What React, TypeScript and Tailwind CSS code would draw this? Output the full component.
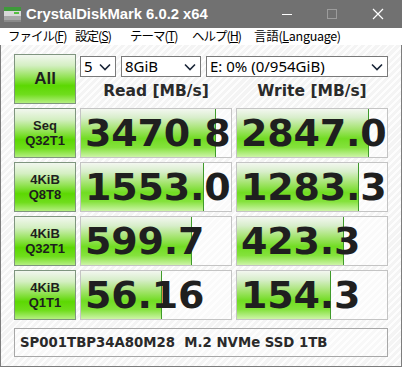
import React from 'react';

const hatch =
  'bg-[repeating-linear-gradient(135deg,#f4f4f4_0px,#f4f4f4_3px,#fdfdfd_3px,#fdfdfd_5px)]';

const rows = [
  { top: 'Seq', bottom: 'Q32T1', read: '3470.8', readW: 90, write: '2847.0', writeW: 88 },
  { top: '4KiB', bottom: 'Q8T8', read: '1553.0', readW: 82, write: '1283.3', writeW: 81 },
  { top: '4KiB', bottom: 'Q32T1', read: '599.7', readW: 74, write: '423.3', writeW: 71 },
  { top: '4KiB', bottom: 'Q1T1', read: '56.16', readW: 54, write: '154.3', writeW: 62.5 },
];

const btnClass =
  'border border-[#7f957f] bg-[linear-gradient(to_bottom,#f2f7ef_0%,#d4efc2_22%,#96e35a_45%,#5cd802_64%,#6fdd1c_82%,#b4ef80_100%)] flex flex-col items-center justify-center text-[#1e1e1e] font-["Liberation_Sans",sans-serif] font-bold';

function Chevron() {
  return (
    <svg width="12" height="8" viewBox="0 0 12 8" className="shrink-0">
      <polyline points="1,1.5 6,6.5 11,1.5" fill="none" stroke="#1a2638" strokeWidth="1.6" />
    </svg>
  );
}

function Select({ label, w }: { label: string; w: string }) {
  return (
    <div className={`${w} h-full bg-white border border-[#7a7a7a] flex items-center justify-between pl-[3px] pr-[4px] text-[15px] text-black font-["Noto_Sans",sans-serif] leading-none`}>
      <span>{label}</span>
      <Chevron />
    </div>
  );
}

function Cell({ value, pct }: { value: string; pct: number }) {
  return (
    <div className="relative h-[50px] border border-[#c4c4c4] bg-white/50 flex items-center pl-[4px] overflow-hidden">
      <div
        className="absolute left-0 top-0 bottom-0 border-r border-[#3f9a2a] bg-[linear-gradient(to_bottom,#f3f7f0_0%,#d8eecb_18%,#a3e46d_42%,#71dc22_62%,#84e23c_80%,#cdf4a8_100%)]"
        style={{ width: `${pct}%` }}
      />
      <span className='relative text-[38px] font-bold leading-none text-[#1f1f1f] font-["DejaVu_Sans",sans-serif] tracking-[-0.2px]'>
        {value}
      </span>
    </div>
  );
}

export default function App() {
  return (
    <div className="w-[402px] h-[367px] flex flex-col overflow-hidden">
      {/* title bar */}
      <div className="h-[28px] bg-[#717171] flex items-center shrink-0">
        <svg width="17" height="15" viewBox="0 0 17 15" className="ml-[4px] mt-[1px]">
          <rect x="0" y="0" width="17" height="4" fill="#3e9a3a" />
          <rect x="0" y="4" width="17" height="5" fill="#d8d8d8" />
          <rect x="10" y="5" width="5" height="2" fill="#56c040" />
          <rect x="0" y="9" width="17" height="4" fill="#a8a8a8" />
          <rect x="0" y="13" width="17" height="2" fill="#8a8a8a" />
        </svg>
        <span className='ml-[5px] text-white text-[14.8px] font-bold font-["Liberation_Sans",sans-serif] leading-none'>
          CrystalDiskMark 6.0.2 x64
        </span>
        <div className="ml-auto flex items-center">
          <div className="w-[10px] h-[1px] bg-white mr-[35px]" />
          <div className="w-[10px] h-[10px] border border-[#9c9c9c] mr-[35px]" />
          <svg width="12" height="12" viewBox="0 0 12 12" className="mr-[18px]">
            <path d="M1 1 L11 11 M11 1 L1 11" stroke="#ffffff" strokeWidth="1.2" />
          </svg>
        </div>
      </div>

      {/* menu bar */}
      <div className='h-[17px] bg-white flex items-center text-[12.5px] tracking-[-1px] text-black leading-none font-["Noto_Sans_CJK_JP",sans-serif] shrink-0'>
        <span className="pl-[8px] w-[75px]">ファイル(<span className="underline">F</span>)</span>
        <span className="w-[55px]">設定(<span className="underline">S</span>)</span>
        <span className="w-[62px]">テーマ(<span className="underline">T</span>)</span>
        <span className="w-[62px]">ヘルプ(<span className="underline">H</span>)</span>
        <span className="tracking-[-0.3px]">言語(<span className="underline">L</span>anguage)</span>
      </div>

      {/* content */}
      <div className={`flex-1 border-l border-r border-b border-[#7d7d7d] pl-[13px] pt-[9px] ${hatch}`}>
        <div className="grid grid-cols-[62px_152px_152px] gap-x-[4px] gap-y-[4px]">
          <div className={`${btnClass} h-[50px] text-[17px]`}>All</div>
          <div className="col-span-2 flex flex-col h-[50px]">
            <div className="flex gap-[5px] h-[21px] mt-[2px]">
              <Select label="5" w="w-[36px]" />
              <Select label="8GiB" w="w-[80px]" />
              <Select label="E: 0% (0/954GiB)" w="w-[182px]" />
            </div>
            <div className='flex flex-1 items-center pt-[2px] text-[15.5px] font-bold text-[#2a2a2a] font-["DejaVu_Sans",sans-serif] leading-none'>
              <div className="w-[152px] text-center">Read [MB/s]</div>
              <div className="w-[4px]" />
              <div className="w-[152px] text-center">Write [MB/s]</div>
            </div>
          </div>

          {rows.map((r, i) => (
            <React.Fragment key={i}>
              <div className={`${btnClass} h-[50px] text-[13px] leading-[15px]`}>
                <span>{r.top}</span>
                <span>{r.bottom}</span>
              </div>
              <Cell value={r.read} pct={r.readW} />
              <Cell value={r.write} pct={r.writeW} />
            </React.Fragment>
          ))}
        </div>

        <div className='mt-[8px] w-[374px] h-[29px] border border-[#a8a8a8] bg-white/40 flex items-center pl-[5px] text-[13.3px] font-bold text-[#2a2a2a] font-["DejaVu_Sans",sans-serif] whitespace-pre leading-none'>
          SP001TBP34A80M28  M.2 NVMe SSD 1TB
        </div>
      </div>
    </div>
  );
}
